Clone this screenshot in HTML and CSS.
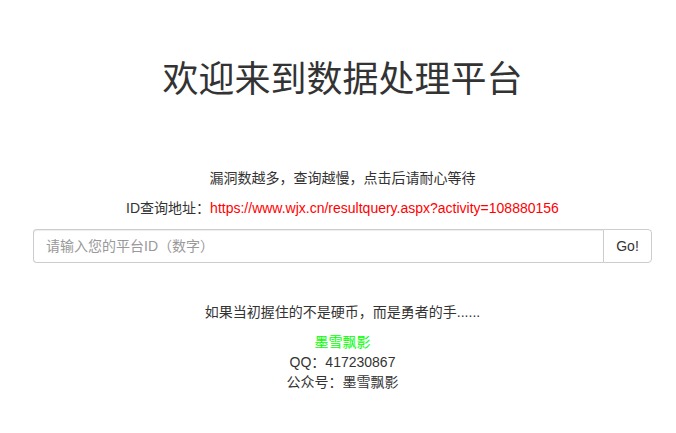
FILE: index.html
```html
<!DOCTYPE html>
<html lang="zh-CN">
<head>
<meta charset="utf-8">
<title>数据处理平台</title>
<link rel="stylesheet" href="styles.css">
</head>
<body>
<div class="container">
  <h1 class="title">欢迎来到数据处理平台</h1>
  <p class="tip">漏洞数越多，查询越慢，点击后请耐心等待</p>
  <p class="addr">ID查询地址：<span class="link">https://www.wjx.cn/resultquery.aspx?activity=108880156</span></p>
  <div class="input-group">
    <input class="form-control" type="text" placeholder="请输入您的平台ID（数字）">
    <button class="btn" type="button">Go!</button>
  </div>
  <p class="quote">如果当初握住的不是硬币，而是勇者的手......</p>
  <div class="author">
    <div class="name">墨雪飘影</div>
    <div>QQ：417230867</div>
    <div>公众号：墨雪飘影</div>
  </div>
</div>
</body>
</html>
```
FILE: styles.css
```css
* { box-sizing: border-box; }
html, body { margin: 0; padding: 0; background: #fff; }
body {
  font-family: "Liberation Sans", "Noto Sans CJK SC", sans-serif;
  font-size: 14px;
  line-height: 20px;
  color: #333;
}
.container {
  padding: 0 24px 0 33px;
  text-align: center;
}
.title {
  margin: 0;
  padding-top: 57px;
  font-size: 36px;
  line-height: 46px;
  font-weight: 400;
  color: #333;
}
.tip { margin: 65px 0 0; }
.addr { margin: 10px 0 0; }
.link { color: #f00; }
.input-group {
  display: flex;
  margin-top: 11px;
}
.form-control {
  flex: 1;
  height: 34px;
  padding: 6px 12px;
  font: inherit;
  color: #555;
  border: 1px solid #ccc;
  border-right: 0;
  border-radius: 4px 0 0 4px;
  box-shadow: inset 0 1px 1px rgba(0,0,0,.075);
  outline: none;
}
.form-control::placeholder { color: #999; }
.btn {
  width: 49px;
  height: 34px;
  padding: 6px 12px;
  font: inherit;
  color: #333;
  background: #fff;
  border: 1px solid #ccc;
  border-radius: 0 4px 4px 0;
}
.quote { margin: 39px 0 0; }
.author { margin-top: 10px; }
.name { color: #0f0; }
```
